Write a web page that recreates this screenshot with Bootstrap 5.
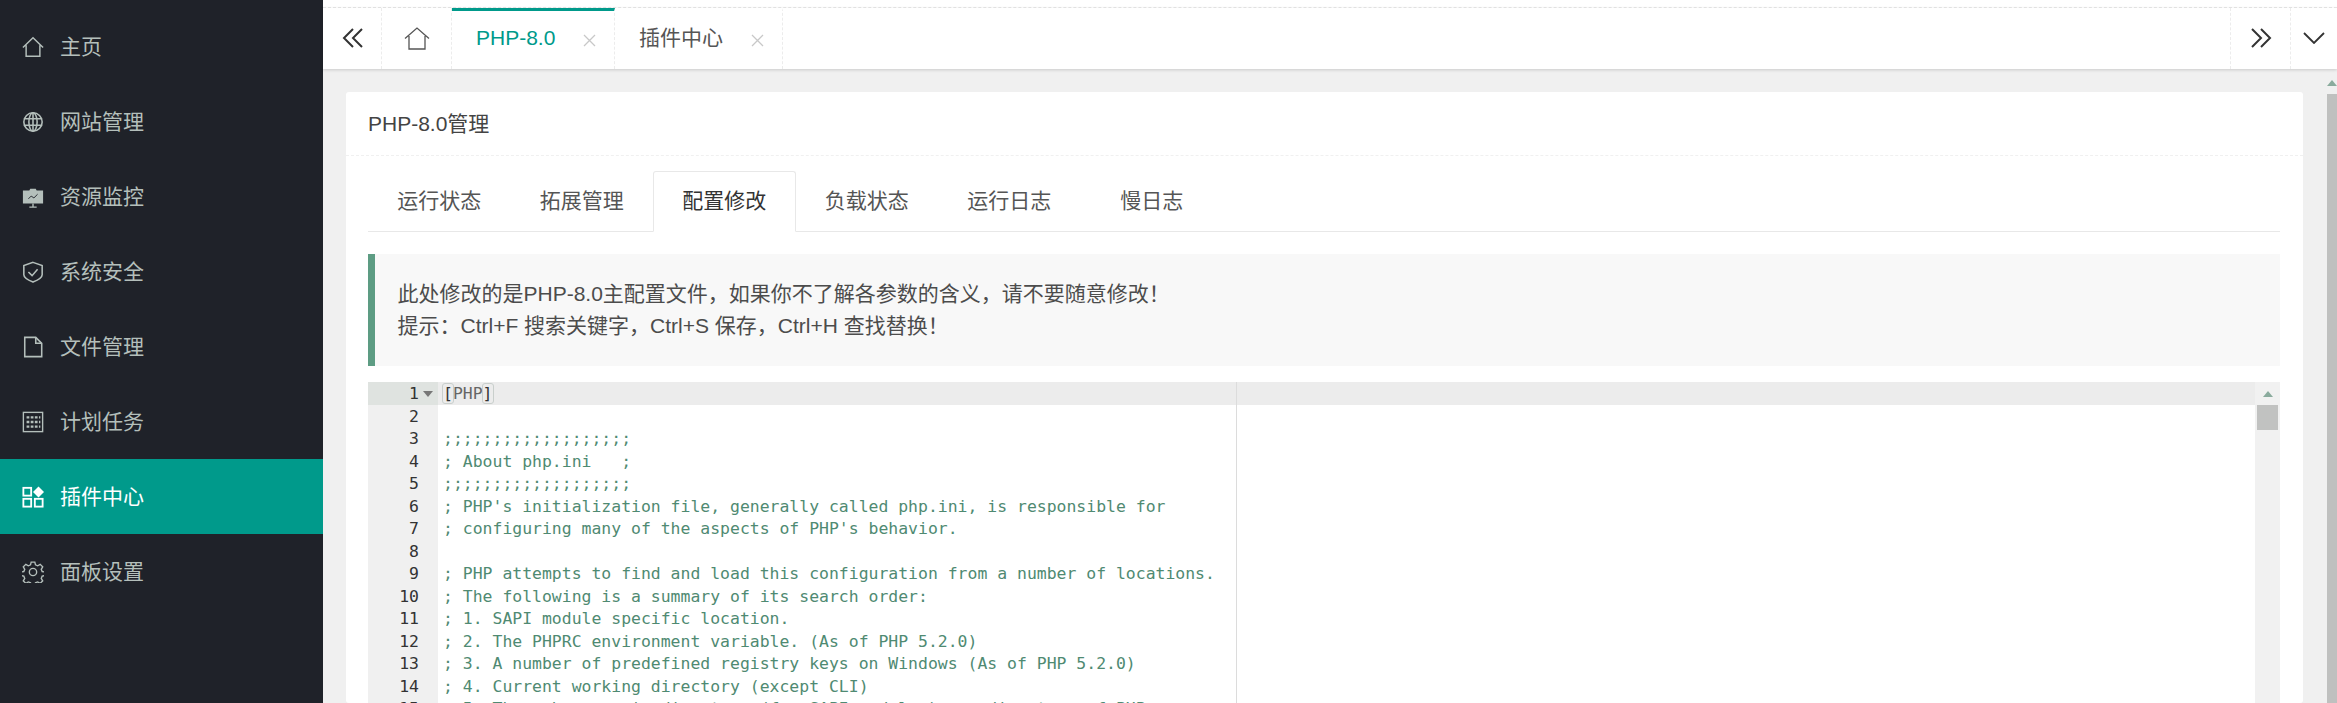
<!DOCTYPE html>
<html lang="zh-CN">
<head>
<meta charset="utf-8">
<title>PHP-8.0管理</title>
<link href="https://cdn.jsdelivr.net/npm/bootstrap@5.3.0/dist/css/bootstrap.min.css" rel="stylesheet">
<style>
html,body{height:100%;overflow:hidden}
body{font-family:"Liberation Sans","Noto Sans CJK SC",sans-serif;font-size:21px;background:#f0f0f0;color:#333}
.app-shell{height:703px}
.side-menu{width:323px;background:#1f2229;padding-top:9px}
.side-item{height:75px;color:#b4bfbb;padding-left:22px;gap:16px;text-decoration:none}
.side-item svg{width:22px;height:22px;flex:none}
.side-item.is-on{background:#009a8b;color:#fff}
.top-strip{height:8px;background:#fff;border-bottom:1px dashed #e8e8e8}
.top-bar{height:61px;background:#fff;box-shadow:0 1px 3px rgba(0,0,0,.16);position:relative;z-index:2}
.bar-cell{height:100%;border-right:1px dashed #ececec}
.bar-collapse{width:59px;padding-left:2px}
.bar-home{width:70px;padding-left:1px}
.bar-right{width:60px;border-right:0;border-left:1px dashed #ececec}
.page-tab{border-right:1px dashed #ececec;gap:28px;padding:0 0 5px 24px;color:#555;border-top:3px solid transparent}
.page-tab.is-on{color:#009a8b;border-top-color:#009a8b}
.page-tab svg{margin-top:7px}
.page-tab.second{width:168px}
.page-tab.first{width:163px}
.work-area{padding:23px 24px 0 23px;min-width:0}
.pane{background:#fff;border-radius:3px;height:100%}
.pane-head{height:64px;padding-left:22px;padding-top:1px;border-bottom:1px dashed #f0f0f0;color:#444}
.pane-body{padding:15.5px 23px 0 22px}
.soft-tabs{height:61px;border-bottom:1.5px solid #e8e8e8;margin-bottom:22px}
.soft-tab{width:142.5px;height:61px;text-align:center;line-height:60px;color:#555;margin-bottom:-1.5px}
.soft-tab.is-on{color:#333;background:#fff;border:1.5px solid #e8e8e8;border-bottom-color:#fff;border-radius:3px 3px 0 0;line-height:58px}
.note-box{height:112px;background:#f8f8f8;border-left:7.5px solid #5d9c83;padding:24px 0 0 22.5px;line-height:32px;color:#4c4c4c;margin-bottom:16px}
.code-frame{position:relative;height:322px;overflow:hidden;font-family:"DejaVu Sans Mono","Liberation Mono",monospace;font-size:16.45px;line-height:24px}
.code-gutter{width:70px;background:#f0f0f0;color:#333;flex:none}
.gut-line{height:22.5px;padding-right:19px;text-align:right;position:relative}
.gut-line.is-active{background:#dfe3e0}
.gut-line.is-active::after{content:"";position:absolute;right:5px;top:9px;border:5px solid transparent;border-top:6px solid #777;border-bottom:0}
.code-lines{color:#4f8a72;min-width:0}
.code-line{height:22.5px;padding-left:5px;white-space:pre}
.code-line.is-active{background:#ececec;color:#666}
.brace{border:1px solid #c9cfcc;border-radius:3px;color:#333;margin:0 -1px}
.print-rule{position:absolute;left:868px;top:0;bottom:0;width:1px;background:#dcdcdc}
.code-scroll{width:25px;background:#f1f1f1;flex:none;padding:0 2px;position:relative}
.up-arrow{width:0;height:0;border:5.5px solid transparent;border-top:0;border-bottom:6px solid #8aab9d;margin:9px auto 8px}
.scroll-grip{height:25px;background:#c1c2c1}
.page-scroll{width:10px;flex:none;position:relative}
.page-scroll .up-arrow{margin:11px auto 8px;border-width:0 5px 6px}
.page-grip{background:#bfc0bf;height:620px}
</style>
</head>
<body>
<div class="app-shell d-flex">
  <nav class="side-menu flex-shrink-0 d-flex flex-column">
    <a class="side-item d-flex align-items-center" href="#"><svg viewBox="0 0 24 24" fill="none" stroke="currentColor" stroke-width="1.6"><path d="M1 12.5 12 2l11 10.5M4.5 10v12h15V10"/></svg><span>主页</span></a>
    <a class="side-item d-flex align-items-center" href="#"><svg viewBox="0 0 24 24" fill="none" stroke="currentColor" stroke-width="1.7"><circle cx="12" cy="12" r="10"/><ellipse cx="12" cy="12" rx="4.5" ry="10"/><path d="M2 8.500h20M2 15.500h20M12 2v20"/></svg><span>网站管理</span></a>
    <a class="side-item d-flex align-items-center" href="#"><svg viewBox="0 0 24 24"><path fill="currentColor" d="M9 3h6l1 2h7v14H1V5h7z"/><path fill="none" stroke="#1f2229" stroke-width="1" d="M7 14l3-3 3 2 4-4"/><path fill="none" stroke="currentColor" stroke-width="1.500" d="M12 19v4M8 23h8"/></svg><span>资源监控</span></a>
    <a class="side-item d-flex align-items-center" href="#"><svg viewBox="0 0 24 24" fill="none" stroke="currentColor" stroke-width="1.700"><path d="M12 1.500 22 5v10c0 3-5 6-10 8C7 21 2 18 2 15V5z"/><path d="m7 12 4 4 6-7"/></svg><span>系统安全</span></a>
    <a class="side-item d-flex align-items-center" href="#"><svg viewBox="0 0 24 24" fill="none" stroke="currentColor" stroke-width="1.700"><path d="M3 1.500h12l6.500 6.500v14.500H3z"/><path d="M15 1.500V8h6.500"/></svg><span>文件管理</span></a>
    <a class="side-item d-flex align-items-center" href="#"><svg viewBox="0 0 24 24" fill="none" stroke="currentColor" stroke-width="1.500"><rect x="1.500" y="1.500" width="21" height="21"/><path stroke-width="2.500" stroke-dasharray="3 1.500" d="M5 7h15M5 12h15M5 17h15"/></svg><span>计划任务</span></a>
    <a class="side-item is-on d-flex align-items-center" href="#"><svg viewBox="0 0 24 24" fill="none" stroke="currentColor" stroke-width="2"><rect x="1.500" y="2" width="8.500" height="8.500"/><rect x="1.500" y="14" width="8.500" height="8.500"/><rect x="14" y="14" width="8.500" height="8.500"/><path fill="currentColor" stroke="none" d="M18 .5 24 6.500l-6 6-6-6z"/></svg><span>插件中心</span></a>
    <a class="side-item d-flex align-items-center" href="#"><svg viewBox="0 0 24 24" fill="none" stroke="currentColor" stroke-width="1.500"><circle cx="12" cy="12" r="4"/><path d="M10 1.200h4l.7 3 2.400 1 2.700-1.600 2.800 2.800-1.600 2.700 1 2.400 2.800.5v4l-2.800.5-1 2.400 1.600 2.700-2.800 2.800-2.700-1.600-2.400 1-.7 3h-4l-.7-3-2.400-1-2.700 1.600-2.800-2.800 1.600-2.700-1-2.400-2.800-.5v-4l2.800-.5 1-2.400-1.600-2.700 2.800-2.800 2.700 1.600 2.400-1z"/></svg><span>面板设置</span></a>
  </nav>
  <div class="flex-grow-1 d-flex flex-column" style="min-width:0">
    <div class="top-strip"></div>
    <header class="top-bar d-flex align-items-stretch flex-shrink-0">
      <div class="bar-cell bar-collapse d-flex align-items-center justify-content-center"><svg width="22" height="20" viewBox="0 0 22 20" fill="none" stroke="#333" stroke-width="2"><path d="M11 1 2 10l9 9M20 1l-9 9 9 9"/></svg></div>
      <div class="bar-cell bar-home d-flex align-items-center justify-content-center"><svg width="26" height="23" viewBox="0 0 26 23" fill="none" stroke="#555" stroke-width="1.300"><path d="M1 11.500 13 1l12 10.500M5 9v13h16V9"/></svg></div>
      <div class="page-tab first is-on d-flex align-items-center"><span>PHP-8.0</span><svg width="13" height="13" viewBox="0 0 13 13" stroke="#c8c8c8" stroke-width="1.300"><path d="m1 1 11 11M12 1 1 12"/></svg></div>
      <div class="page-tab second d-flex align-items-center"><span>插件中心</span><svg width="13" height="13" viewBox="0 0 13 13" stroke="#c8c8c8" stroke-width="1.300"><path d="m1 1 11 11M12 1 1 12"/></svg></div>
      <div class="flex-grow-1"></div>
      <div class="bar-cell bar-right d-flex align-items-center justify-content-center"><svg width="22" height="20" viewBox="0 0 22 20" fill="none" stroke="#333" stroke-width="2"><path d="m2 1 9 9-9 9M11 1l9 9-9 9"/></svg></div>
      <div class="bar-cell bar-right d-flex align-items-center justify-content-center" style="width:47px"><svg width="22" height="12" viewBox="0 0 22 12" fill="none" stroke="#333" stroke-width="1.800"><path d="m1 1 10 10L21 1"/></svg></div>
    </header>
    <div class="d-flex flex-grow-1" style="min-height:0">
      <main class="work-area flex-grow-1">
        <section class="pane">
          <div class="pane-head d-flex align-items-center">PHP-8.0管理</div>
          <div class="pane-body">
            <div class="soft-tabs d-flex">
              <div class="soft-tab">运行状态</div>
              <div class="soft-tab">拓展管理</div>
              <div class="soft-tab is-on">配置修改</div>
              <div class="soft-tab">负载状态</div>
              <div class="soft-tab">运行日志</div>
              <div class="soft-tab">慢日志</div>
            </div>
            <div class="note-box">此处修改的是PHP-8.0主配置文件，如果你不了解各参数的含义，请不要随意修改！<br>提示：Ctrl+F 搜索关键字，Ctrl+S 保存，Ctrl+H 查找替换！</div>
            <div class="code-frame d-flex">
              <div class="code-gutter">
                <div class="gut-line is-active">1</div><div class="gut-line">2</div><div class="gut-line">3</div><div class="gut-line">4</div><div class="gut-line">5</div><div class="gut-line">6</div><div class="gut-line">7</div><div class="gut-line">8</div><div class="gut-line">9</div><div class="gut-line">10</div><div class="gut-line">11</div><div class="gut-line">12</div><div class="gut-line">13</div><div class="gut-line">14</div><div class="gut-line">15</div>
              </div>
              <div class="code-lines flex-grow-1">
                <div class="code-line is-active"><span class="brace">[</span>PHP<span class="brace">]</span></div>
                <div class="code-line"></div>
                <div class="code-line">;;;;;;;;;;;;;;;;;;;</div>
                <div class="code-line">; About php.ini   ;</div>
                <div class="code-line">;;;;;;;;;;;;;;;;;;;</div>
                <div class="code-line">; PHP's initialization file, generally called php.ini, is responsible for</div>
                <div class="code-line">; configuring many of the aspects of PHP's behavior.</div>
                <div class="code-line"></div>
                <div class="code-line">; PHP attempts to find and load this configuration from a number of locations.</div>
                <div class="code-line">; The following is a summary of its search order:</div>
                <div class="code-line">; 1. SAPI module specific location.</div>
                <div class="code-line">; 2. The PHPRC environment variable. (As of PHP 5.2.0)</div>
                <div class="code-line">; 3. A number of predefined registry keys on Windows (As of PHP 5.2.0)</div>
                <div class="code-line">; 4. Current working directory (except CLI)</div>
                <div class="code-line">; 5. The web server's directory (for SAPI modules), or directory of PHP</div>
              </div>
              <div class="print-rule"></div>
              <div class="code-scroll"><div class="up-arrow"></div><div class="scroll-grip"></div></div>
            </div>
          </div>
        </section>
      </main>
      <div class="page-scroll"><div class="up-arrow"></div><div class="page-grip"></div></div>
    </div>
  </div>
</div>
<script src="https://cdn.jsdelivr.net/npm/bootstrap@5.3.0/dist/js/bootstrap.bundle.min.js"></script>
</body>
</html>
